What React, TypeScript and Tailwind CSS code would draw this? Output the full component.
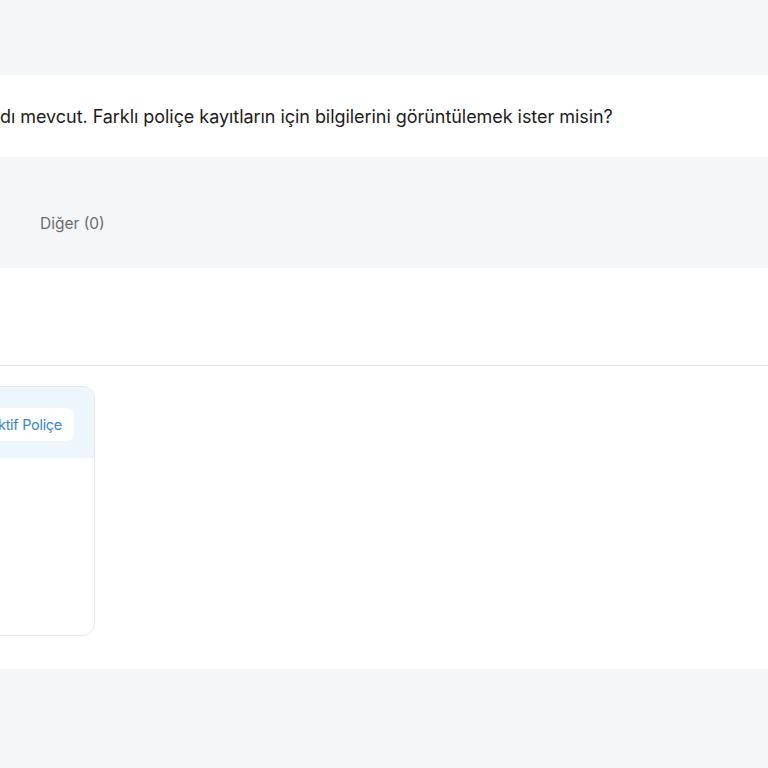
import React from 'react';

const font = { fontFamily: 'Inter, "Noto Sans", sans-serif' };

export default function App() {
  return (
    <div className="min-h-screen w-full bg-[#f5f6f8] overflow-hidden" style={font}>
      <div className="h-[75px]" />
      <div className="h-[82px] bg-white flex items-center">
        <p className="whitespace-nowrap text-[18px] text-[#1c1c1c] tracking-[-0.05px]">
          dı mevcut. Farklı poliçe kayıtların için bilgilerini görüntülemek ister misin?
        </p>
      </div>
      <div className="h-[111px] flex items-center pl-10 pt-[22px]">
        <span className="text-[15.5px] text-[#6b6b6b]">Diğer (0)</span>
      </div>
      <div className="h-[98px] bg-white border-b border-[#e3e4e6]" />
      <div className="bg-white pt-5 pb-[33px]">
        <div className="-ml-[105px] w-[200px] h-[250px] rounded-xl border border-[#e6e8eb] overflow-hidden">
          <div className="h-[71px] bg-[#eef6fd] flex items-center justify-end pr-5 pt-1">
            <span className="bg-white rounded-lg pl-3.5 pr-3 py-1.5 text-[14.5px] tracking-[-0.3px] text-[#3a86c8]">
              Aktif Poliçe
            </span>
          </div>
        </div>
      </div>
    </div>
  );
}
